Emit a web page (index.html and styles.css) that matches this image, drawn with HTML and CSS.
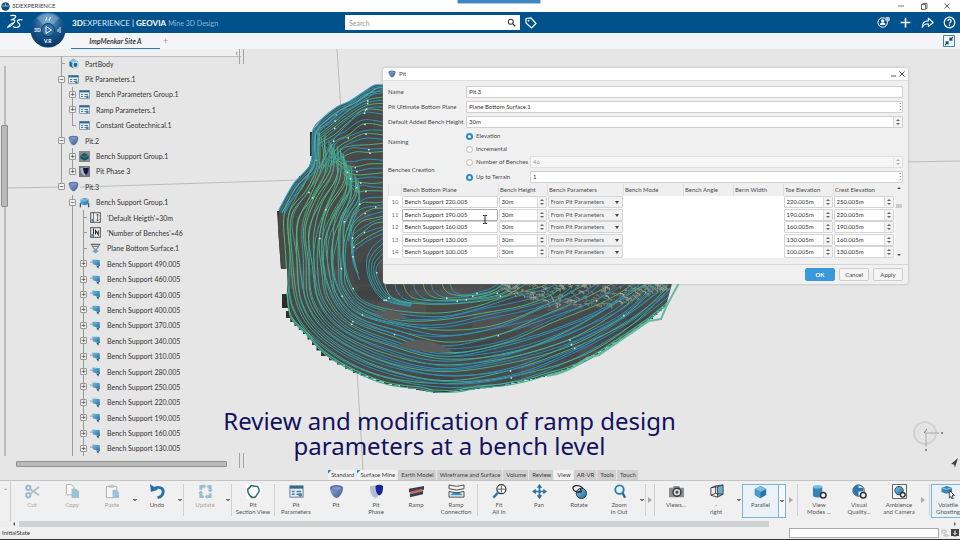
FILE: index.html
```html
<!DOCTYPE html>
<html lang="en">
<head>
<meta charset="utf-8">
<title>3DEXPERIENCE</title>
<link rel="stylesheet" href="styles.css">
</head>
<body>
<svg class="defs" aria-hidden="true">
  <defs>
    <linearGradient id="gPit" x1="0" y1="0" x2="1" y2="1"><stop offset="0" stop-color="#8fa6cf"/><stop offset="1" stop-color="#3f598f"/></linearGradient>
    <linearGradient id="gBlue" x1="0" y1="0" x2="1" y2="1"><stop offset="0" stop-color="#7fc0e2"/><stop offset="1" stop-color="#1f6f9f"/></linearGradient>
    <radialGradient id="gBall" cx=".5" cy=".25" r=".8"><stop offset="0" stop-color="#6fa3cc"/><stop offset=".5" stop-color="#17568c"/><stop offset="1" stop-color="#06315c"/></radialGradient>
  </defs>
  <symbol id="pit" viewBox="0 0 16 16"><path d="M1 4c0 5 3 10 7 11 4-1 7-6 7-11z" fill="url(#gPit)"/><ellipse cx="8" cy="4" rx="7" ry="3" fill="#5a74ab"/><ellipse cx="8" cy="4.600" rx="5" ry="1.800" fill="#8198c4"/></symbol>
  <symbol id="params" viewBox="0 0 16 16"><rect x="1" y="2" width="14" height="12" fill="#e9f0f4" stroke="#667a86"/><path d="M1 2h14v3H1z" fill="#336b8d"/><path d="M3 8h3M3 11h3M8 8h5M8 11h3" stroke="#3f7fa3" stroke-width="1.500"/><circle cx="12" cy="11.500" r="2" fill="#3a83ad"/></symbol>
  <symbol id="bench" viewBox="0 0 16 16"><path d="M3 2l11 1 .5 9L4 9z" fill="url(#gBlue)"/><path d="M9 11l4 1-1 3.500z" fill="#1d4f6c"/><path d="M0 6h4" stroke="#777"/></symbol>
  <symbol id="group" viewBox="0 0 16 16"><path d="M2 3l6-2 6 2v7l-6 2-6-2z" fill="url(#gBlue)"/><path d="M2 3l6 2 6-2" stroke="#bfe2f3" fill="none"/><path d="M2 9v6M14 9v6" stroke="#1f5f88" stroke-width="2"/></symbol>
  <symbol id="darkgroup" viewBox="0 0 16 16"><path d="M0 0h16v16H0z" fill="#85888c"/><path d="M2 6l6-3 6 3v5l-6 3-6-3z" fill="#1d5263"/><path d="M2 6l6 3 6-3" stroke="#5da3b2" fill="none"/></symbol>
  <symbol id="darkphase" viewBox="0 0 16 16"><path d="M0 0h16v16H0z" fill="#77797f"/><path d="M2 3c0 6 3 10 6 11l4-3V2z" fill="#b4b8c1"/><path d="M6 3h8c0 5-1 8-4 10-3-2-4-6-4-10z" fill="#171450"/></symbol>
  <symbol id="height" viewBox="0 0 16 16"><rect x="1" y="1" width="14" height="14" fill="#f2f2f2" stroke="#555" stroke-width="1.500"/><path d="M5 1v14M11 3v10M9 5l2-2 2 2M9 11l2 2 2-2" fill="none" stroke="#333"/><path d="M2 10h4v4H2z" fill="#4b8eb0"/></symbol>
  <symbol id="number" viewBox="0 0 16 16"><rect x="1" y="1" width="14" height="14" fill="#f2f2f2" stroke="#555" stroke-width="1.500"/><path d="M5 2v12M8 11V5l4 6V5" fill="none" stroke="#222" stroke-width="1.500"/><path d="M2 10h4v4H2z" fill="#4b8eb0"/></symbol>
  <symbol id="plane" viewBox="0 0 16 16"><path d="M2 2h12l-4 7H6z" fill="#dfe3e5" stroke="#444"/><path d="M4 5h8M1 2h14" stroke="#444"/><path d="M3 12l5-3 5 3-5 3z" fill="#64a8cb"/></symbol>
  <symbol id="body" viewBox="0 0 16 16"><path d="M2 5l6-4 6 4v7l-6 3-6-3z" fill="#1e6d94"/><path d="M2 5l6-4 6 4-6 3z" fill="#8fc3dc"/><circle cx="11" cy="10" r="4" fill="none" stroke="#c4dce8" stroke-width="2"/></symbol>
</svg>

<header>
  <div class="titlebar">
    <svg class="appicon" viewBox="0 0 16 16"><circle cx="8" cy="8" r="7.500" fill="#124d80"/><path d="M2 7h12M8 2v5" stroke="#8fc0e6" stroke-width="2"/></svg>
    <span>3DEXPERIENCE</span>
    <div class="winctl">
      <button aria-label="Minimize"><svg viewBox="0 0 8 8"><path d="M1 4h6" stroke="#777"/></svg></button>
      <button aria-label="Restore"><svg viewBox="0 0 8 8"><path d="M1.500 2.500h4v5h-4zM3 2.500v-1h4v5H5.500" fill="none" stroke="#666"/></svg></button>
      <button aria-label="Close"><svg viewBox="0 0 8 8"><path d="M1.500 1.500l5 5M6.500 1.500l-5 5" stroke="#666"/></svg></button>
    </div>
    <div class="notch"></div>
  </div>
  <div class="brandbar">
    <svg class="ds" viewBox="0 0 32 32"><g fill="none" stroke="#fff" stroke-width="2.200" stroke-linecap="round" stroke-linejoin="round"><path d="M9 3c6-1 11 0 9 3-1 2-5 4-8 5 5-1 8 0 6 4-3 5-9 9-13 10 3-5 6-7 12-9"/><path d="M30 11c-6-1-10 1-8 4s6 5 3 8-7 3-11 1"/></g></svg>
    <p class="brand"><b>3D</b>EXPERIENCE <i>|</i> <b>GEOVIA</b> <span>Mine 3D Design</span></p>
    <form class="search">
      <input type="search" aria-label="Search" placeholder="Search">
      <button type="button" aria-label="Run search"><svg viewBox="0 0 12 12"><circle cx="5" cy="5" r="3.300" fill="none" stroke="#333" stroke-width="1.400"/><path d="M7.500 7.500L11 11" stroke="#333" stroke-width="1.800"/></svg></button>
    </form>
    <button class="tag" aria-label="Tags"><svg viewBox="0 0 12 12"><path d="M1 1.500l5-.5 5 5.500L6.500 11 1 6z" fill="none" stroke="#fff" stroke-width="1.200"/><circle cx="3.600" cy="3.700" r=".9" fill="#fff"/></svg></button>
    <div class="actions">
      <button aria-label="Profile"><svg viewBox="0 0 16 16"><circle cx="7" cy="8" r="5.800" fill="none" stroke="#fff" stroke-width="1.200"/><circle cx="7" cy="6" r="2" fill="#fff"/><path d="M3.500 11c0-4 7-4 7 0z" fill="#fff"/><circle cx="13" cy="4" r="3" fill="#b9c5d6"/></svg></button>
      <button aria-label="Add"><svg viewBox="0 0 16 16"><path d="M8 2v12M2 8h12" stroke="#fff" stroke-width="2"/></svg></button>
      <button aria-label="Share"><svg viewBox="0 0 16 16"><path d="M1.500 14c0-6 3-8 7.500-8V2.500L15 8l-6 5V9.500C5 9.500 3 11 1.500 14z" fill="none" stroke="#fff" stroke-width="1.300" stroke-linejoin="round"/></svg></button>
      <button aria-label="Help"><svg viewBox="0 0 16 16"><circle cx="8" cy="8" r="6.500" fill="none" stroke="#fff" stroke-width="1.500"/><path d="M6 6.300c0-3 4.300-2.600 4 0-.2 1.300-2 1.300-2 3M8 10.600v1.600" fill="none" stroke="#fff" stroke-width="1.500"/></svg></button>
    </div>
  </div>
  <nav class="doctabs">
    <a class="doctab" href="#site">ImpMenkar Site A</a><a class="newtab" href="#new" aria-label="New tab">+</a>
    <button class="collapse" aria-label="Exit full screen"><svg viewBox="0 0 12 12"><path d="M.5.5h11v11H.5z" fill="#f4fafd" stroke="#3d86a8"/><path d="M10 2L7 5M7 2.500V5h2.500M2 10l3-3M5 9.500V7H2.500" fill="none" stroke="#14506f" stroke-width="1.300"/></svg></button>
  </nav>
  <svg class="compass" viewBox="0 0 36 36" role="img" aria-label="Compass"><circle cx="18" cy="18" r="17.500" fill="url(#gBall)"/><path d="M7 6q11-9 22 0l-6 7q-5-4-10 0z" fill="#8fb8d8" opacity=".45"/><circle cx="18" cy="18" r="6.500" fill="#2f71a4" stroke="#0b3d6b"/><path d="M16 14.500l5.500 3.500-5.500 3.500z" fill="none" stroke="#fff"/><path d="M17 5l-1.500 4M20.500 5L19 9M30 15v6M28 17v3" stroke="#e4f0f9" fill="none"/><text x="4" y="20">3D</text><text x="14" y="31">V.R</text></svg>
</header>

<main>
  <svg class="scene" viewBox="0 49 960 431" preserveAspectRatio="xMidYMid slice" role="img" aria-label="Pit contour model">
    <path d="M8 188L60 187M80 187L300 180M337 49L341 110M357 370L363 470M900 162L960 161" stroke="#bbb" fill="none"/>
    <g id="model"></g>
    <g fill="none" stroke="#d2d2d2"><circle cx="925" cy="433" r="11" stroke-width="2"/><circle cx="925" cy="433" r="7" stroke="#dcdcdc"/><path d="M925 433h14M926 433v14" stroke="#aaa"/><path d="M924 433l3-4" stroke="#777"/><path d="M941 433h2M925 450h2" stroke="#888" stroke-width="2"/></g>
    <path d="M958 458l-7 6 3 .5 1 3z" fill="#444"/>
  </svg>

  <aside class="explorer">
    <div class="panelbar"><button aria-label="Collapse tree">‹</button></div>
    <div class="treewrap">
      <div class="vscroll"><i></i></div>
      <ul class="tree">
        <li class="l0 a leaf"><svg><use href="#body"/></svg>PartBody</li>
        <li class="l0 a"><button>−</button><svg><use href="#params"/></svg>Pit Parameters.1</li>
        <li class="l1 a b"><button>+</button><svg><use href="#params"/></svg>Bench Parameters Group.1</li>
        <li class="l1 a b"><button>+</button><svg><use href="#params"/></svg>Ramp Parameters.1</li>
        <li class="l1 a bend leaf"><svg><use href="#params"/></svg>Constant Geotechnical.1</li>
        <li class="l0 a"><button>−</button><svg><use href="#pit"/></svg>Pit.2</li>
        <li class="l1 a b"><button>+</button><svg><use href="#darkgroup"/></svg>Bench Support Group.1</li>
        <li class="l1 a bend"><button>+</button><svg><use href="#darkphase"/></svg>Pit Phase 3</li>
        <li class="l0 aend"><button>−</button><svg><use href="#pit"/></svg>Pit.3</li>
        <li class="l1 b"><button>−</button><svg><use href="#group"/></svg>Bench Support Group.1</li>
        <li class="l2 b c leaf"><svg><use href="#height"/></svg>'Default Heigth'=30m</li>
        <li class="l2 b c leaf"><svg><use href="#number"/></svg>'Number of Benches'=46</li>
        <li class="l2 b c leaf"><svg><use href="#plane"/></svg>Plane Bottom Surface.1</li>
        <li class="l2 b c"><button>+</button><svg><use href="#bench"/></svg>Bench Support 490.005</li>
        <li class="l2 b c"><button>+</button><svg><use href="#bench"/></svg>Bench Support 460.005</li>
        <li class="l2 b c"><button>+</button><svg><use href="#bench"/></svg>Bench Support 430.005</li>
        <li class="l2 b c"><button>+</button><svg><use href="#bench"/></svg>Bench Support 400.005</li>
        <li class="l2 b c"><button>+</button><svg><use href="#bench"/></svg>Bench Support 370.005</li>
        <li class="l2 b c"><button>+</button><svg><use href="#bench"/></svg>Bench Support 340.005</li>
        <li class="l2 b c"><button>+</button><svg><use href="#bench"/></svg>Bench Support 310.005</li>
        <li class="l2 b c"><button>+</button><svg><use href="#bench"/></svg>Bench Support 280.005</li>
        <li class="l2 b c"><button>+</button><svg><use href="#bench"/></svg>Bench Support 250.005</li>
        <li class="l2 b c"><button>+</button><svg><use href="#bench"/></svg>Bench Support 220.005</li>
        <li class="l2 b c"><button>+</button><svg><use href="#bench"/></svg>Bench Support 190.005</li>
        <li class="l2 b c"><button>+</button><svg><use href="#bench"/></svg>Bench Support 160.005</li>
        <li class="l2 b c"><button>+</button><svg><use href="#bench"/></svg>Bench Support 130.005</li>
      </ul>
    </div>
    <div class="hscroll"><i></i></div>
  </aside>

  <p class="caption">Review and modification of ramp design<br>parameters at a bench level</p>

  <section class="dialog" role="dialog" aria-labelledby="dlgtitle">
    <div class="dlghead"><svg><use href="#pit"/></svg><span id="dlgtitle">Pit</span>
      <button aria-label="Minimize dialog"><svg viewBox="0 0 8 8"><path d="M1 6h5" stroke="#555"/></svg></button>
      <button aria-label="Close dialog"><svg viewBox="0 0 8 8"><path d="M1.500 1.500l5 5M6.500 1.500l-5 5" stroke="#444"/></svg></button>
    </div>
    <form class="form">
      <label for="name">Name</label><div class="field"><input id="name" value="Pit.3"></div>
      <label for="ubp">Pit Ultimate Bottom Plane</label><div class="field dots"><input id="ubp" value="Plane Bottom Surface.1"></div>
      <label for="dbh">Default Added Bench Height</label><div class="field spin"><input id="dbh" value="30m"><i></i></div>
      <span>Naming</span>
      <div class="stack">
        <label><input type="radio" name="naming" checked>Elevation</label>
        <label><input type="radio" name="naming">Incremental</label>
      </div>
      <span>Benches Creation</span>
      <div class="stack wide">
        <div class="pair"><label><input type="radio" name="creation">Number of Benches</label><div class="field spin off"><input aria-label="Bench count" value="46" disabled><i></i></div></div>
        <div class="pair"><label><input type="radio" name="creation" checked>Up to Terrain</label><div class="field dots"><input aria-label="Terrain" value="1"></div></div>
      </div>
    </form>
    <div class="gridwrap">
      <table>
        <colgroup><col class="c0"><col class="c1"><col class="c2"><col class="c3"><col class="c4"><col class="c5"><col class="c5"><col class="c5"><col class="c6"></colgroup>
        <thead><tr><th></th><th>Bench Bottom Plane</th><th>Bench Height</th><th>Bench Parameters</th><th>Bench Mode</th><th>Bench Angle</th><th>Berm Width</th><th>Toe Elevation</th><th>Crest Elevation</th></tr></thead>
        <tbody>
          <tr><th>10</th><td><div class="cell"><input aria-label="Plane 10" value="Bench Support 220.005"></div></td><td><div class="cell spin"><input aria-label="Height 10" value="30m"><i></i></div></td><td><div class="cell pick"><select aria-label="Parameters 10"><option>From Pit Parameters</option></select></div></td><td></td><td></td><td></td><td><div class="cell spin"><input aria-label="Toe 10" value="220.005m"><i></i></div></td><td><div class="cell spin"><input aria-label="Crest 10" value="250.005m"><i></i></div></td></tr>
          <tr><th>11</th><td><div class="cell focus"><input aria-label="Plane 11" value="Bench Support 190.005"></div></td><td><div class="cell spin"><input aria-label="Height 11" value="30m"><i></i></div></td><td><div class="cell pick"><select aria-label="Parameters 11"><option>From Pit Parameters</option></select></div></td><td></td><td></td><td></td><td><div class="cell spin"><input aria-label="Toe 11" value="190.005m"><i></i></div></td><td><div class="cell spin"><input aria-label="Crest 11" value="220.005m"><i></i></div></td></tr>
          <tr><th>12</th><td><div class="cell"><input aria-label="Plane 12" value="Bench Support 160.005"></div></td><td><div class="cell spin"><input aria-label="Height 12" value="30m"><i></i></div></td><td><div class="cell pick"><select aria-label="Parameters 12"><option>From Pit Parameters</option></select></div></td><td></td><td></td><td></td><td><div class="cell spin"><input aria-label="Toe 12" value="160.005m"><i></i></div></td><td><div class="cell spin"><input aria-label="Crest 12" value="190.005m"><i></i></div></td></tr>
          <tr><th>13</th><td><div class="cell"><input aria-label="Plane 13" value="Bench Support 130.005"></div></td><td><div class="cell spin"><input aria-label="Height 13" value="30m"><i></i></div></td><td><div class="cell pick"><select aria-label="Parameters 13"><option>From Pit Parameters</option></select></div></td><td></td><td></td><td></td><td><div class="cell spin"><input aria-label="Toe 13" value="130.005m"><i></i></div></td><td><div class="cell spin"><input aria-label="Crest 13" value="160.005m"><i></i></div></td></tr>
          <tr><th>14</th><td><div class="cell"><input aria-label="Plane 14" value="Bench Support 100.005"></div></td><td><div class="cell spin"><input aria-label="Height 14" value="30m"><i></i></div></td><td><div class="cell pick"><select aria-label="Parameters 14"><option>From Pit Parameters</option></select></div></td><td></td><td></td><td></td><td><div class="cell spin"><input aria-label="Toe 14" value="100.005m"><i></i></div></td><td><div class="cell spin"><input aria-label="Crest 14" value="130.005m"><i></i></div></td></tr>
        </tbody>
      </table>
      <div class="gridscroll"><b class="up"></b><i></i><b class="down"></b></div>
    </div>
    <div class="dlgfoot"><button class="ok">OK</button><button>Cancel</button><button>Apply</button></div>
    <svg class="ibeam" viewBox="0 0 6 9"><path d="M1 .5h1.500l.5.500.5-.5H5M1 8.500h1.500L3 8l.5.500H5M3 1v7" fill="none" stroke="#222"/></svg>
  </section>

  <nav class="ribbon">
    <a class="on mark" href="#standard">Standard</a><a class="on mark" href="#mine">Surface Mine</a><a href="#earth">Earth Model</a><a href="#wire">Wireframe and Surface</a><a href="#volume">Volume</a><a href="#review">Review</a><a class="on" href="#view">View</a><a href="#ar">AR-VR</a><a href="#tools">Tools</a><a href="#touch">Touch</a>
  </nav>
</main>

<footer>
  <div class="tools">
    <button class="grip" aria-label="Toolbar menu">⌄</button>
    <button class="tool off"><svg viewBox="0 0 16 16"><g fill="none" stroke="#3b7fae" stroke-width="2"><circle cx="3.500" cy="4" r="2.300"/><circle cx="3.500" cy="12" r="2.300"/></g><path d="M5 5l10 7M5 11l10-8" stroke="#78909e" stroke-width="2"/></svg><span>Cut</span></button>
    <button class="tool off"><svg viewBox="0 0 16 16"><path d="M1.500.5h5l3 3v8h-8z" fill="#fff" stroke="#667"/><path d="M7 5h5l3 3v7H7z" fill="#4c93bd"/></svg><span>Copy</span></button>
    <button class="tool off"><svg viewBox="0 0 16 16"><path d="M1.500 2.500h11v12h-11z" fill="#fff" stroke="#667"/><path d="M4.500 1h5v3h-5z" fill="#899"/><path d="M8 6h4l3 3v6H8z" fill="#4c93bd"/></svg><span>Paste</span></button>
    <i class="dd"></i>
    <button class="tool"><svg viewBox="0 0 16 16"><path d="M3 5c6-3 12-1 11 4-.5 3-3 5-6 5.500" fill="none" stroke="#2572a6" stroke-width="3"/><path d="M0 0l1 8.500L8.500 6z" fill="#2572a6"/></svg><span>Undo</span></button>
    <i class="dd"></i><hr>
    <button class="tool off"><svg viewBox="0 0 16 16"><g fill="none" stroke="#4387b0" stroke-width="3"><path d="M6 2.500H3V6M10 2.500h3V6M6 13.500H3V10M10 13.500h3V10"/></g><path d="M6 0l3 2.500L6 5zM16 6l-3 3-3-3zM10 11l-3 2.500 3 2.500zM0 10l3-3 3 3z" fill="#4387b0"/></svg><span>Update</span></button>
    <i class="dd"></i><hr>
    <button class="tool"><svg class="white" viewBox="0 0 16 16"><path d="M5 2.500c1-2 3 0 4 0s3-1 4 1 2 4 0 6-2 5-5 5-4-2-5-4-2-5 0-6 1-1 2-2z" fill="#fff" stroke="#2c6d6a" stroke-width="1.600"/></svg><span>Pit<br>Section View</span></button>
    <hr>
    <button class="tool"><svg><use href="#params"/></svg><span>Pit<br>Parameters</span></button>
    <button class="tool"><svg><use href="#pit"/></svg><span>Pit</span></button>
    <button class="tool"><svg viewBox="0 0 16 16"><path d="M1 2c0 7 2 12 6 13 3-1 5-4 5-8V1z" fill="#b5bdd0"/><path d="M7 2c3-2 6-1 8 0 0 6-1 9-4 10-3-1-4-5-4-10z" fill="#1b2596"/></svg><span>Pit<br>Phase</span></button>
    <button class="tool"><svg viewBox="0 0 16 16"><path d="M0 5l16-3v4L0 9z" fill="#34414d"/><path d="M1 10l14-3v4L1 14z" fill="#34414d"/><path d="M2 8l12-3v3L2 11z" fill="#c86a5a"/></svg><span>Ramp</span></button>
    <button class="tool"><svg class="broad" viewBox="0 0 16 16"><path d="M0 1q8 3 16 0M0 5q8 3 16 0M0 1v4M16 1v4" fill="none" stroke="#444"/><path d="M1 12q7-7 14 0z" fill="#3f92c4"/><path d="M0 8q8 3 16 0v6H0z" fill="none" stroke="#444"/></svg><span>Ramp<br>Connection</span></button>
    <hr>
    <button class="tool"><svg viewBox="0 0 16 16"><circle cx="10" cy="5.500" r="4.800" fill="#f6fafc" stroke="#333" stroke-width="1.300"/><path d="M7 8.500L1.500 14.500" stroke="#2b7bb0" stroke-width="2.600"/><path d="M10 2v7M6.500 5.500h7" stroke="#555"/></svg><span>Fit<br>All In</span></button>
    <button class="tool"><svg viewBox="0 0 16 16"><path d="M8 2v12M2 8h12" stroke="#246f9d" stroke-width="1.800"/><path d="M8 0l3 4H5zM8 16l3-4H5zM0 8l4-3v6zM16 8l-4-3v6z" fill="#246f9d"/></svg><span>Pan</span></button>
    <button class="tool"><svg viewBox="0 0 16 16"><circle cx="10" cy="10" r="5.500" fill="url(#gBlue)" stroke="#234"/><path d="M12 5C8 0 0 1 1 5s6 4 8 3M9 5l1 3-3 1" fill="none" stroke="#222" stroke-width="1.300"/></svg><span>Rotate</span></button>
    <button class="tool"><svg viewBox="0 0 16 16"><circle cx="8" cy="6" r="4.500" fill="#e9f5fb" stroke="#2b7bb0" stroke-width="2"/><path d="M11 9l3 5.500" stroke="#2b6c94" stroke-width="2.500"/></svg><span>Zoom<br>In Out</span></button>
    <i class="dd"></i><hr><i class="more"></i><hr>
    <button class="tool"><svg viewBox="0 0 16 16"><path d="M0 4h4l1-2h6l1 2h4v10H0z" fill="#8b8f92"/><circle cx="8.500" cy="8.800" r="4.200" fill="#d9dcde" stroke="#333" stroke-width="1.500"/><circle cx="8.500" cy="8.800" r="1.500" fill="#444"/></svg><span>Views...</span></button>
    <button class="tool"><svg viewBox="0 0 16 16"><path d="M9 3l6-2v10l-6 3z" fill="#68aed3"/><path d="M2 4l7-1 6-2v10l-6 3-7-2zM9 3v11M2 4l5-2 8-1M7 2v8l-5 2M7 10l8 1" fill="none" stroke="#444"/></svg><span>-<br>right</span></button>
    <i class="dd"></i>
    <button class="tool sel"><svg viewBox="0 0 16 16"><path d="M8 1l6.500 3.500v7L8 15l-6.500-3.500v-7z" fill="#2877a7"/><path d="M8 1l6.500 3.500L8 8 1.500 4.500z" fill="#7cbde0"/><path d="M1.500 4.500L8 8v7l-6.500-3.500z" fill="#4a9aca"/></svg><span>Parallel</span></button><i class="dd box"></i>
    <i class="more"></i><hr>
    <button class="tool"><svg viewBox="0 0 16 16"><path d="M1 3v10q5 3 10 0V3z" fill="#3584b4"/><ellipse cx="6" cy="3" rx="5" ry="2" fill="#7dbbdb"/><circle cx="12" cy="12" r="3" fill="#f1f1f1" stroke="#333" stroke-width="1.600"/></svg><span>View<br>Modes ...</span></button>
    <button class="tool"><svg viewBox="0 0 16 16"><circle cx="7" cy="7" r="6" fill="#fff" stroke="#234"/><path d="M7 1a6 6 0 0 0 0 12zM7 4h5v4H7z" fill="#2879ab"/><circle cx="12" cy="12" r="3" fill="#f1f1f1" stroke="#333" stroke-width="1.600"/></svg><span>Visual<br>Quality...</span></button>
    <button class="tool"><svg viewBox="0 0 16 16"><path d="M.5.500h15v15H.5z" fill="#fff" stroke="#555"/><circle cx="7.500" cy="7" r="4.500" fill="url(#gBlue)" stroke="#245"/><circle cx="11.500" cy="11.500" r="2.500" fill="#f1f1f1" stroke="#333" stroke-width="1.500"/></svg><span>Ambience<br>and Camera</span></button>
    <i class="more"></i><hr>
    <button class="tool sel last"><svg viewBox="0 0 16 16"><path d="M0 3l6-2 6 2v5l-6 2-6-2z" fill="#3685b3"/><path d="M0 3l6 2 6-2" fill="none" stroke="#a9d4ea"/><path d="M9 6l6 6-3 .3 1.500 3-1.500.7-1.300-3L9 15z" fill="#fff" stroke="#333"/></svg><span>Volatile<br>Ghosting</span></button>
  </div>
  <div class="barscroll"><b class="left"></b><i></i><b class="right"></b></div>
  <div class="status"><label for="cmd">InitialState</label><input id="cmd"><button aria-label="Messages"><svg viewBox="0 0 8 8"><path d="M1 1h4v3H1zM3 6h4v1H3z" fill="none" stroke="#bbb"/></svg></button><button aria-label="Alerts"><svg viewBox="0 0 8 8"><path d="M0 0h8v7H5L4 8 3 7H0z" fill="#444"/><path d="M4 1.500v4M2.500 4L4 5.500 5.500 4" stroke="#fff" fill="none"/></svg></button></div>
</footer>
<script src="contours.js"></script>
</body>
</html>
```
FILE: styles.css
```css
* { box-sizing: border-box; }
body {
  margin: 0;
  min-height: 100vh;
  display: flex;
  flex-direction: column;
  overflow: hidden;
  background: #e6e6e6;
  color: #3c3c3c;
  font-family: Lato, "Open Sans", sans-serif;
  font-size: 7px;
  line-height: 8px;
}
button, input, select { font: inherit; color: inherit; margin: 0; padding: 0; border: 0; background: none; min-width: 0; outline: 0; }
a { color: inherit; text-decoration: none; }
ul { margin: 0; padding: 0; list-style: none; }
p { margin: 0; }
svg { display: block; flex: none; }
.defs { position: absolute; width: 0; height: 0; }

/* header */
header { position: relative; z-index: 2; }
.titlebar { position: relative; display: flex; align-items: center; height: 12px; background: #fff; font-size: 6px; }
.appicon { width: 9px; height: 9px; margin: 0 2px 0 1px; }
.winctl { margin-left: auto; display: flex; gap: 15px; padding-right: 9px; }
.winctl button, .winctl svg { width: 8px; height: 8px; }
.notch { position: absolute; left: 457px; top: 0; width: 84px; height: 4px; background: #3d86c2; border: 1px solid #a9cbe6; border-top: 0; border-radius: 0 0 2px 2px; }
.brandbar { display: flex; align-items: center; height: 21px; padding: 0 4px 0 6px; background: #00518c; color: #fff; }
.ds { width: 17px; height: 17px; }
.brand { flex: none; margin-left: 49px; width: 273px; font-size: 8px; color: #dce8f2; white-space: nowrap; }
.brand b { color: #fff; }
.brand i { font-style: normal; color: #fff; }
.brand span { font-size: 7px; color: #8fb7d6; }
.search { display: flex; align-items: center; width: 175px; height: 15px; background: #fff; }
.search input { flex: 1; padding-left: 4px; color: #333; }
.search input::placeholder { color: #999; }
.search svg { width: 9px; height: 9px; margin-right: 4px; }
.tag { margin-left: 5px; }
.tag svg { width: 12px; height: 12px; }
.actions { display: flex; gap: 9px; margin-left: auto; }
.actions svg { width: 13px; height: 13px; }
.doctabs { display: flex; align-items: center; height: 16px; padding: 0 5px 0 71px; background: #f4f5f8; }
.doctab { width: 89px; height: 15px; line-height: 15px; border-bottom: 1px solid #2a7fb2; text-align: center; font-weight: bold; font-style: italic; }
.newtab { margin-left: 3px; color: #999; font-size: 9px; }
.collapse { margin-left: auto; }
.collapse svg { width: 12px; height: 12px; }
.compass { position: absolute; left: 30px; top: 12px; width: 36px; height: 36px; }
.compass text { fill: #fff; font: bold 5px Lato, sans-serif; }

/* workspace */
main { position: relative; flex: 1; display: flex; align-items: stretch; }
.scene { position: absolute; inset: 0; width: 100%; height: 100%; }
.explorer { position: relative; display: flex; flex-direction: column; width: 244px; padding-bottom: 13px; color: #333; }
.explorer::before, .explorer::after { content: ""; position: absolute; right: 0; width: 3px; height: 15px; border: solid #a5a5a5; border-width: 0 1px; }
.explorer::before { top: 0; }
.explorer::after { bottom: 12px; }
.panelbar { display: flex; justify-content: flex-end; height: 8px; margin-right: 3px; padding-right: 3px; background: #f0f0f0; border-bottom: 1px solid #bbb; }
.panelbar button { line-height: 6px; font-size: 9px; color: #666; }
.treewrap { flex: 1; display: flex; }
.vscroll { width: 7px; margin: 9px 0 5px 1px; padding-top: 59px; background: linear-gradient(#bbb, #bbb) center / 2px 100% no-repeat; }
.vscroll i { display: block; height: 82px; background: #b9b9b9; border: 1px solid #8f8f8f; border-radius: 1px; }
.tree { flex: 1; display: flex; flex-direction: column; margin: -1px 0 5px -8px; }
.tree li {
  --a: transparent; --b: transparent; --c: transparent; --ah: 100%; --bh: 100%;
  flex: 1; display: flex; align-items: center; white-space: nowrap;
  background:
    linear-gradient(var(--a), var(--a)) 61px 0 / 1px var(--ah) no-repeat,
    linear-gradient(var(--b), var(--b)) 72px 0 / 1px var(--bh) no-repeat,
    linear-gradient(var(--c), var(--c)) 83px 0 / 1px 100% no-repeat;
}
.tree .a, .tree .aend { --a: #999; }
.tree .b, .tree .bend { --b: #999; }
.tree .c { --c: #999; }
.tree .aend { --ah: 50%; }
.tree .bend { --bh: 50%; }
.tree .l0 { padding-left: 58px; }
.tree .l1 { padding-left: 69px; }
.tree .l2 { padding-left: 80px; }
.tree button { width: 7px; height: 7px; line-height: 5px; border: 1px solid #999; border-radius: 1px; background: #eee; color: #222; font-size: 8px; }
.tree svg { width: 11px; height: 11px; margin: 0 6px 0 3px; }
.tree .leaf::before { content: ""; width: 4px; height: 1px; margin-left: 3px; background: #999; }
.hscroll { height: 6px; padding-right: 17px; padding-left: 16px; }
.hscroll i { display: block; height: 6px; background: #b9b9b9; border: 1px solid #919191; border-radius: 1px; }

.caption { position: absolute; left: 0; right: 61px; bottom: 22px; text-align: center; font: 24px/25px "Noto Sans", sans-serif; color: #12125e; }

.ribbon { position: absolute; left: 328px; bottom: 0; display: flex; gap: 1px; font-size: 6px; }
.ribbon a { padding: 0 2px 0 3px; line-height: 10px; background: #cfcfcf; white-space: nowrap; }
.ribbon .on { background: #f1f1f1; }
.ribbon .mark { background: linear-gradient(135deg, #2d83bb 2px, #f1f1f1 3px); }

/* dialog */
.dialog { position: absolute; left: 383px; right: 52px; top: 19px; background: #f0f0f1; border-radius: 3px; box-shadow: 0 0 3px #8888; font-size: 6px; color: #4a4a4a; }
.dlghead { display: flex; align-items: center; height: 13px; padding: 0 2px 0 5px; background: #fff; border-bottom: 1px solid #ddd; border-radius: 3px 3px 0 0; }
.dlghead > svg { width: 8px; height: 8px; margin-right: 3px; }
.dlghead span { margin-right: auto; }
.dlghead button svg { width: 8px; height: 8px; }
.form { display: grid; grid-template-columns: 78px 1fr; row-gap: 3px; align-items: center; padding: 5px 5px 1px; white-space: nowrap; }
.field { display: flex; position: relative; height: 12px; background: #fff; border: 1px solid #cfcfcf; border-radius: 1px; flex: 1; }
.field input { flex: 1; padding-left: 2px; color: #333; }
.dots::after { content: "⋮"; width: 6px; line-height: 10px; font-size: 8px; font-family: "DejaVu Sans", sans-serif; color: #555; text-align: center; }
.spin i { position: relative; width: 9px; border-left: 1px solid #ddd; background: #f3f3f3; }
.spin i::before, .spin i::after { content: ""; position: absolute; left: 2px; border: 2px solid transparent; }
.spin i::before { top: 0; border-bottom-color: #666; border-top-width: 0; margin-top: 2px; }
.spin i::after { bottom: 0; border-top-color: #666; border-bottom-width: 0; margin-bottom: 2px; }
.off.field { background: #f6f6f6; border-color: #dedede; }
.off input { color: #999; }
.off i { opacity: .5; }
.stack { display: flex; flex-direction: column; gap: 5px; padding-top: 1px; }
.stack label { display: flex; align-items: center; gap: 3px; }
.stack input[type=radio] { appearance: none; width: 7px; height: 7px; border: 1px solid #bbb; border-radius: 50%; background: #fff; }
.stack input[type=radio]:checked { border: 2px solid #2d8cc8; }
.wide { gap: 3px; padding: 0; }
.pair { display: flex; align-items: center; }
.pair > label { width: 64px; }
.gridwrap { display: flex; padding: 0 4px 6px 5px; }
table { flex: 1; border-collapse: collapse; table-layout: fixed; background: #fff; width: 0; }
.c0 { width: 13px; } .c1 { width: 97px; } .c2 { width: 49px; } .c3 { width: 76px; } .c4 { width: 60px; } .c5 { width: 50px; } .c6 { width: 61px; }
th, td { padding: 0; font-weight: normal; white-space: nowrap; }
thead th { height: 12px; padding-left: 1px; text-align: left; background: #efefef; border-left: 1px solid #ddd; }
tbody th { text-align: center; color: #777; }
tbody tr { height: 12px; }
tbody tr:nth-child(even) { height: 13px; }
.cell { display: flex; position: relative; height: 12px; margin-right: 1px; border: 1px solid #d4d4d4; border-radius: 1px; }
.cell input { flex: 1; width: 0; padding-left: 2px; color: #333; }
.focus { border-color: #aaa; }
.pick { background: #f1f1f1; }
.pick select { appearance: none; flex: 1; padding-left: 2px; color: #555; }
.pick::after { content: ""; position: absolute; right: 3px; top: 4px; border: 2px solid transparent; border-top: 3px solid #444; border-bottom: 0; }
.gridscroll { width: 10px; display: flex; flex-direction: column; align-items: center; padding: 3px 0 2px; }
.gridscroll i { width: 6px; height: 4px; margin: 15px 0 auto; background: #ccc; }
.up, .down { border: 2px solid transparent; }
.up { border-bottom-color: #555; border-top: 0; }
.down { border-top-color: #555; border-bottom: 0; }
.dlgfoot { display: flex; justify-content: flex-end; gap: 4px; height: 20px; padding: 3px 5px; border-top: 1px solid #d6d6d6; }
.dlgfoot button { width: 30px; height: 13px; border: 1px solid #cdcdcd; border-radius: 2px; background: #f5f5f5; }
.dlgfoot .ok { background: #3a98dc; border-color: #3a98dc; color: #fff; font-weight: bold; }
.ibeam { position: absolute; left: 99px; top: 147px; width: 6px; height: 9px; }

/* toolbar */
footer { position: relative; border-bottom: 1px solid #333; background: #f0f0f0; }
.tools { display: flex; height: 41px; padding-top: 3px; border-top: 1px solid #c4c4c4; overflow: hidden; font-size: 6px; line-height: 7px; }
.grip { flex: none; width: 11px; margin: -3px 1px 0 0; padding-bottom: 28px; border-right: 1px solid #ccc; color: #777; }
.tool { flex: none; display: flex; flex-direction: column; align-items: center; gap: 2px; width: 40px; height: 34px; text-align: center; color: #555; white-space: nowrap; }
.tool svg { width: 15px; height: 15px; }
.tool .white { background: #fff; }
.tool .broad { width: 17px; }
.tool.off { opacity: .5; }
.tools hr { flex: none; width: 1px; height: 32px; margin: 0 1px; border: 0; background: #d0d0d0; }
.dd { flex: none; width: 5px; height: 34px; background: linear-gradient(#777, #777) center 15px / 4px 1px no-repeat, linear-gradient(#777, #777) center 16px / 2px 1px no-repeat; }
.tool.sel { width: 37px; margin-left: 1px; border: 1px solid #7fb3d3; background: #eaf2f7; }
.tool.sel svg { height: 14px; }
.dd.box { width: 7px; border: 1px solid #7fb3d3; border-left: 0; background-color: #f7f7f7; }
.tool.sel.last { width: 34px; margin-left: 0; }
.more { flex: none; width: 4px; height: 6px; margin: 13px 1px 0; background: #aaa; clip-path: polygon(0 0, 100% 50%, 0 100%); }
.box + .more { margin: 13px 3px 0; }
.tool + .more { margin: 13px 3px 0 2px; }
.barscroll { display: flex; align-items: center; height: 6px; padding: 0 4px 0 2px; border-left: 11px solid #eee; }
.barscroll i { width: 750px; height: 6px; margin: 0 auto 0 4px; background: #d0d1d3; }
.left, .right { border: 2px solid transparent; }
.left { border-right-color: #555; border-left: 0; }
.right { border-left-color: #555; border-right: 0; }
.status { display: flex; align-items: center; height: 12px; padding: 0 1px 0 2px; color: #333; font-size: 6px; }
.status input { width: 150px; height: 10px; margin-left: auto; background: #fff; border: 1px solid #aaa; }
.status button svg { width: 8px; height: 8px; margin-left: 2px; }
```
FILE: contours.js
```js
const NS = 'http://www.w3.org/2000/svg';
const model = document.getElementById('model');
let seed = 7;
const rnd = () => (seed = (seed * 16807) % 2147483647) / 2147483647;

function add(tag, attrs, parent = model) {
  const el = document.createElementNS(NS, tag);
  for (const k in attrs) el.setAttribute(k, attrs[k]);
  parent.appendChild(el);
  return el;
}

// Catmull-Rom spline through the points
function spline(p) {
  let d = `M${p[0]}`;
  for (let i = 0; i < p.length - 1; i++) {
    const a = p[Math.max(i - 1, 0)], b = p[i], c = p[i + 1], e = p[Math.min(i + 2, p.length - 1)];
    d += `C${b[0] + (c[0] - a[0]) / 6} ${b[1] + (c[1] - a[1]) / 6} ${c[0] - (e[0] - b[0]) / 6} ${c[1] - (e[1] - b[1]) / 6} ${c[0]} ${c[1]}`;
  }
  return d;
}

const outline = [[383,85],[375,85],[368,89],[350,101],[337,107],[323,118],[313,130],[312,157],[309,167],[295,182],[288,193],[279,210],[278,230],[281,269],[287,269],[287,293],[290,317],[307,333],[325,355],[357,372],[388,383],[420,389],[433,391],[457,390],[477,388],[502,385],[527,379],[547,375],[570,367],[595,354],[623,337],[650,318],[667,302],[673,280],[673,85]];
const poly = outline.map(p => p.join(',')).join(' ');

const defs = add('defs', {});
const clip = add('clipPath', { id: 'pitclip' }, defs);
add('polygon', { points: poly }, clip);
const grad = (id, stops) => {
  const g = add('linearGradient', { id, gradientUnits: 'userSpaceOnUse', x1: 290, y1: 230, x2: 410, y2: 330 }, defs);
  stops.forEach(([o, c]) => add('stop', { offset: o, 'stop-color': c }, g));
};
grad('c1', [[0, '#55b57c'], [0.5, '#4aa88a'], [1, '#2b93be']]);
grad('c2', [[0, '#3f9f8c'], [0.6, '#2f97b4'], [1, '#4fae80']]);
grad('c3', [[0, '#5fb37c'], [1, '#2a86ba']]);
const inks = ['url(#c1)', 'url(#c2)', 'url(#c3)'];

// stepped rim blocks
for (let i = 17; i < 33; i++) {
  const [x1, y1] = outline[i - 1], [x2, y2] = outline[i];
  for (let t = 0; t < 1; t += 0.25) {
    add('rect', { x: x1 + (x2 - x1) * t - 4, y: y1 + (y2 - y1) * t - 6, width: 7, height: 7, fill: '#303231' });
  }
}
add('path', { d: 'M310 132h5v24h-5zM277 211h6l5 58h-7zM282 294h8v14h-8zM299 176h4v4h-4zM286 200h4v5h-4zM433 386h24v5l-24 2z', fill: '#2b2d2c' });
add('polygon', { points: poly, fill: '#484a49' });

const inner = add('g', { 'clip-path': 'url(#pitclip)', fill: 'none' });
for (let i = 0; i < 70; i++) {
  add('rect', { x: 285 + rnd() * 370, y: 95 + rnd() * 285, width: 14 + rnd() * 40, height: 5 + rnd() * 18, fill: rnd() > 0.5 ? '#3e4040' : '#575858', opacity: 0.5 }, inner);
}

const specks = [];
function family(a, b, n, colours, wobble) {
  for (let k = 0; k < n; k++) {
    const t = k / n, ph = rnd() * 6;
    const pts = a.map((p, i) => [
      p[0] + (b[i][0] - p[0]) * t + Math.sin(i * 1.9 + ph) * wobble,
      p[1] + (b[i][1] - p[1]) * t + Math.cos(i * 1.7 + ph) * wobble
    ]);
    add('path', { d: spline(pts), stroke: colours[k % colours.length], 'stroke-width': 1 }, inner);
    if (rnd() > 0.3) specks.push(pts[1 + Math.floor(rnd() * (pts.length - 2))]);
  }
}

const rim = [[316,130],[314,160],[301,186],[285,212],[287,250],[291,305],[318,343],[370,374],[440,387],[510,380],[580,357],[635,325],[674,290]];
const mid = [[342,152],[345,182],[330,212],[322,240],[322,270],[330,300],[352,324],[395,340],[445,354],[505,346],[560,326],[610,302],[645,278]];
const core = [[362,188],[360,205],[352,225],[350,245],[348,265],[352,285],[368,302],[400,310],[440,308],[475,302],[510,294],[535,286],[548,276]];
family(rim, mid, 16, inks, 1.8);
family(mid, core, 14, inks, 2);

const ribs = ['#2d93bd', '#56ae78'];
family([[316,128],[335,114],[350,103],[368,91],[386,86]], [[318,150],[334,140],[346,128],[364,116],[386,118]], 9, ribs, 0.8);
family([[318,170],[332,140],[346,132],[364,120],[386,122]], [[334,165],[346,158],[356,154],[370,158],[386,156]], 8, ribs, 1);
family([[326,146],[340,158],[352,162],[368,160],[386,160]], [[352,190],[360,196],[366,194],[374,196],[386,196]], 8, ribs, 1);
family([[345,225],[354,208],[364,198],[374,198],[386,198]], [[360,285],[352,262],[362,250],[374,240],[386,236]], 11, ribs, 1);
family([[384,238],[372,248],[366,262],[370,282],[384,300],[410,306]], [[386,262],[380,268],[378,274],[382,284],[392,296],[412,302]], 5, ['#2d93bd', '#3f9f8c'], 0.6);
family([[384,278],[388,294],[404,303],[450,304],[500,296],[535,278]], [[460,278],[462,288],[470,293],[480,292],[490,288],[500,278]], 8, ['#4fae7f', '#2f97b4'], 1);

add('path', { d: 'M397 346q22-12 46 0l10 6q-30 2-56-6z', fill: '#5c5c5b' }, inner);
add('path', { d: 'M374 312q20-4 34 6l-20 2z', fill: '#5c5c5b' }, inner);

// broken ground on the eastern slope
for (let i = 0; i < 300; i++) {
  const x = 500 + rnd() * 165, y = 284 + rnd() * Math.max(4, 24 * Math.sin((x - 490) / 58));
  const c = ['#8c9384', '#3c9a86', '#a9b09f', '#5c6058'][Math.floor(rnd() * 4)];
  add('path', { d: `M${x} ${y}l${2 + rnd() * 3} ${-1 + rnd() * 3}l${-2 + rnd() * 3} 2`, stroke: c, 'stroke-width': 0.8 }, inner);
}
specks.forEach(([x, y]) => add('rect', { x, y, width: 1.5, height: 1.5, fill: '#d5f3ea' }, inner));

// crest strings following the rim
const west = outline.slice(0, 12), south = outline.slice(15, 33);
[[0, '#2f9cc0'], [1.5, '#3a7f8d'], [3, '#45b0b5'], [5, '#2f8fb5']].forEach(([o, c]) =>
  add('path', { d: spline(west.map(([x, y]) => [x + o, y + o])), fill: 'none', stroke: c, 'stroke-width': 1.2 }));
[[0, '#3fa79b'], [-2, '#49b183']].forEach(([o, c]) =>
  add('path', { d: spline(south.map(([x, y], i) => [x + (i % 2), y + o + (i % 3)])), fill: 'none', stroke: c, 'stroke-width': 1.2 }));
add('path', { d: 'M547 376q20-2 40-18l12-3 50-34 12-2 6-14 12-22', fill: 'none', stroke: '#69b9a2', 'stroke-width': 2 });
```
